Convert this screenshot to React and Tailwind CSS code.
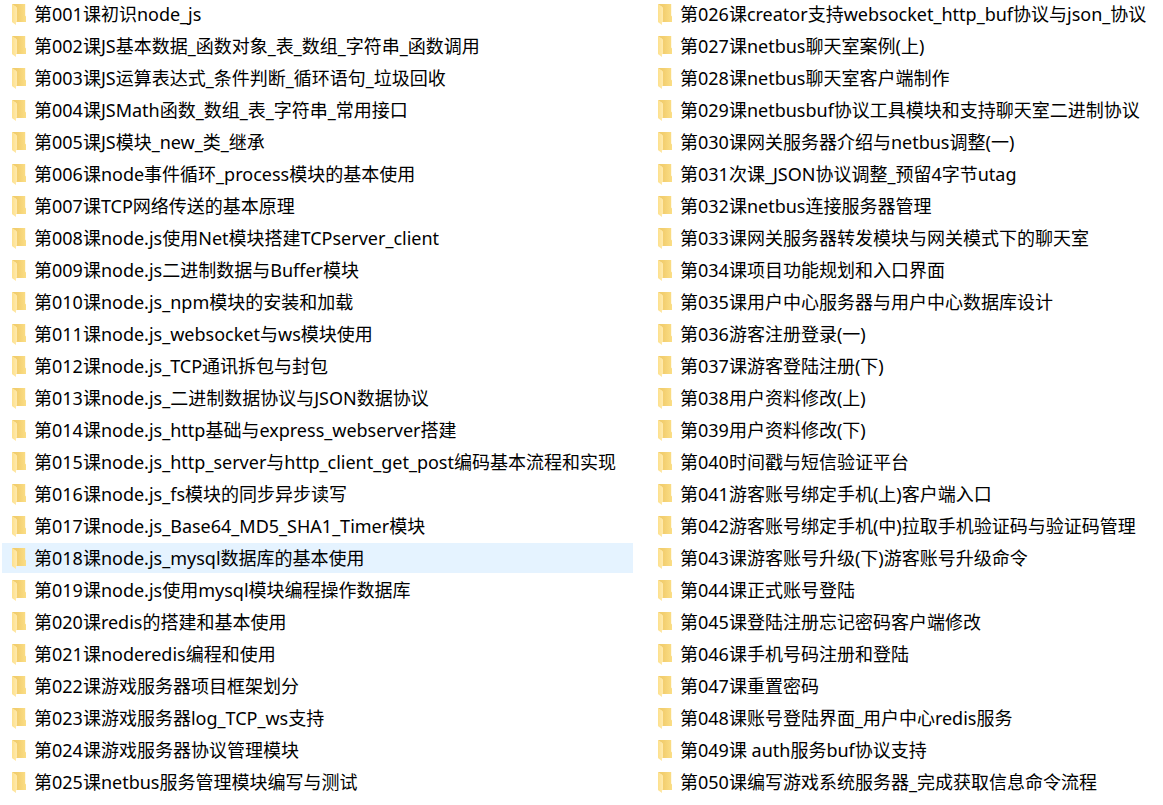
import React, { useState } from 'react';

const leftFolders = [
  '第001课初识node_js',
  '第002课JS基本数据_函数对象_表_数组_字符串_函数调用',
  '第003课JS运算表达式_条件判断_循环语句_垃圾回收',
  '第004课JSMath函数_数组_表_字符串_常用接口',
  '第005课JS模块_new_类_继承',
  '第006课node事件循环_process模块的基本使用',
  '第007课TCP网络传送的基本原理',
  '第008课node.js使用Net模块搭建TCPserver_client',
  '第009课node.js二进制数据与Buffer模块',
  '第010课node.js_npm模块的安装和加载',
  '第011课node.js_websocket与ws模块使用',
  '第012课node.js_TCP通讯拆包与封包',
  '第013课node.js_二进制数据协议与JSON数据协议',
  '第014课node.js_http基础与express_webserver搭建',
  '第015课node.js_http_server与http_client_get_post编码基本流程和实现',
  '第016课node.js_fs模块的同步异步读写',
  '第017课node.js_Base64_MD5_SHA1_Timer模块',
  '第018课node.js_mysql数据库的基本使用',
  '第019课node.js使用mysql模块编程操作数据库',
  '第020课redis的搭建和基本使用',
  '第021课noderedis编程和使用',
  '第022课游戏服务器项目框架划分',
  '第023课游戏服务器log_TCP_ws支持',
  '第024课游戏服务器协议管理模块',
  '第025课netbus服务管理模块编写与测试',
];

const rightFolders = [
  '第026课creator支持websocket_http_buf协议与json_协议',
  '第027课netbus聊天室案例(上)',
  '第028课netbus聊天室客户端制作',
  '第029课netbusbuf协议工具模块和支持聊天室二进制协议',
  '第030课网关服务器介绍与netbus调整(一)',
  '第031次课_JSON协议调整_预留4字节utag',
  '第032课netbus连接服务器管理',
  '第033课网关服务器转发模块与网关模式下的聊天室',
  '第034课项目功能规划和入口界面',
  '第035课用户中心服务器与用户中心数据库设计',
  '第036游客注册登录(一)',
  '第037课游客登陆注册(下)',
  '第038用户资料修改(上)',
  '第039用户资料修改(下)',
  '第040时间戳与短信验证平台',
  '第041游客账号绑定手机(上)客户端入口',
  '第042游客账号绑定手机(中)拉取手机验证码与验证码管理',
  '第043课游客账号升级(下)游客账号升级命令',
  '第044课正式账号登陆',
  '第045课登陆注册忘记密码客户端修改',
  '第046课手机号码注册和登陆',
  '第047课重置密码',
  '第048课账号登陆界面_用户中心redis服务',
  '第049课 auth服务buf协议支持',
  '第050课编写游戏系统服务器_完成获取信息命令流程',
];

const FolderIcon = () => (
  <svg width="14" height="22" viewBox="0 0 14 22" className="shrink-0" aria-hidden="true">
    <defs>
      <linearGradient id="folder-back" x1="0" y1="0" x2="1" y2="0">
        <stop offset="0" stopColor="#eecb6c" />
        <stop offset="0.4" stopColor="#f3cf70" />
        <stop offset="1" stopColor="#fbde86" />
      </linearGradient>
      <linearGradient id="folder-flap" x1="0" y1="0" x2="1" y2="0">
        <stop offset="0" stopColor="#fde08c" />
        <stop offset="1" stopColor="#ffeaae" />
      </linearGradient>
    </defs>
    <path d="M0.3 1H13.2V12.5L14 13.5V19H4V4L0.3 2Z" fill="url(#folder-back)" />
    <path d="M0.3 1L4.6 4.2Q5 4.5 5 5V18.6L4 19.4V22L0.6 19.6Q0 19.2 0 18.4V1.4Z" fill="url(#folder-flap)" />
  </svg>
);

const FolderList = ({ folders, selected, onSelect }) => (
  <ul className="flex flex-col gap-0.5 min-w-0">
    {folders.map((name) => (
      <li key={name}>
        <a
          href="#"
          onClick={(e) => {
            e.preventDefault();
            onSelect(name);
          }}
          className={`flex items-center gap-2 h-[30px] pl-2.5 ${
            name === selected ? 'bg-[#e5f3ff]' : 'bg-white'
          }`}
        >
          <FolderIcon />
          <span className="whitespace-nowrap">{name}</span>
        </a>
      </li>
    ))}
  </ul>
);

const App = () => {
  const [selected, setSelected] = useState('第018课node.js_mysql数据库的基本使用');

  return (
    <main className="-mt-px pl-0.5 pb-2 grid grid-cols-[631fr_515fr] gap-x-[15px] bg-white text-black text-[18px] leading-[30px] font-['Noto_Sans','Noto_Sans_CJK_SC',sans-serif]">
      <FolderList folders={leftFolders} selected={selected} onSelect={setSelected} />
      <FolderList folders={rightFolders} selected={selected} onSelect={setSelected} />
    </main>
  );
};

export default App;
